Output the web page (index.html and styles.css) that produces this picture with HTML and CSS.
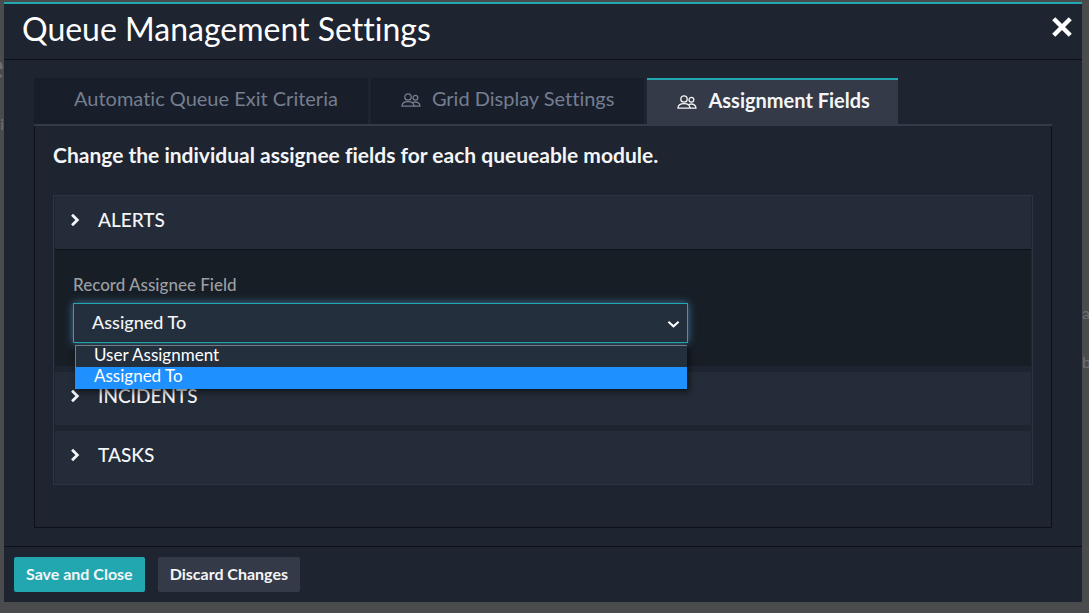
FILE: index.html
```html
<!DOCTYPE html>
<html lang="en">
<head>
  <meta charset="UTF-8">
  <title>Queue Management Settings</title>
  <link rel="stylesheet" href="styles.css">
</head>
<body>
<svg class="sprite" aria-hidden="true">
  <symbol id="users" viewBox="0 0 20 16">
    <circle cx="7" cy="5" r="3.2"/>
    <circle cx="14.4" cy="5.8" r="2.4"/>
    <path d="M1 14.2c0-3.2 2.4-4.6 6-4.6s6 1.400 6 4.600z"/>
    <path d="M12 10.400c4-1.200 7 .4 7 3.800h-6"/>
  </symbol>
  <symbol id="chevron" viewBox="0 0 8 12">
    <path d="M1.500 1.500 6 6l-4.500 4.500"/>
  </symbol>
</svg>
<div class="page">
  <div class="behind behind-left" aria-hidden="true">
    <span class="behind-title">e</span>
    <span class="behind-text">i</span>
  </div>
  <div class="modal" role="dialog" aria-labelledby="title">
    <header class="modal-header">
      <h1 id="title">Queue Management Settings</h1>
      <button class="close" type="button" aria-label="Close">
        <svg viewBox="0 0 20 20"><path d="M2.500 2.500l15 15M17.500 2.500l-15 15"/></svg>
      </button>
    </header>
    <main class="modal-body">
      <div class="tabs" role="tablist">
        <button class="tab" type="button" role="tab">Automatic Queue Exit Criteria</button>
        <button class="tab" type="button" role="tab"><svg class="users"><use href="#users"/></svg>Grid Display Settings</button>
        <button class="tab active" type="button" role="tab" aria-selected="true"><svg class="users"><use href="#users"/></svg>Assignment Fields</button>
      </div>
      <section class="panel" role="tabpanel">
        <p class="intro">Change the individual assignee fields for each queueable module.</p>
        <div class="accordion">
          <button class="module" type="button" aria-expanded="true"><svg class="chevron"><use href="#chevron"/></svg>ALERTS</button>
          <div class="module-body">
            <label for="assignee">Record Assignee Field</label>
            <div class="select-box">
              <select id="assignee">
                <option>User Assignment</option>
                <option selected>Assigned To</option>
              </select>
              <svg class="arrow" viewBox="0 0 14 8"><path d="M1.500 1.500 7 6.500l5.500-5"/></svg>
              <ul class="options" role="listbox">
                <li role="option">User Assignment</li>
                <li class="selected" role="option" aria-selected="true">Assigned To</li>
              </ul>
            </div>
          </div>
          <button class="module" type="button"><svg class="chevron"><use href="#chevron"/></svg>INCIDENTS</button>
          <button class="module" type="button"><svg class="chevron"><use href="#chevron"/></svg>TASKS</button>
        </div>
      </section>
    </main>
    <footer class="modal-footer">
      <button class="btn primary" type="button">Save and Close</button>
      <button class="btn" type="button">Discard Changes</button>
    </footer>
  </div>
  <div class="behind behind-right" aria-hidden="true">
    <span class="behind-text">at</span>
    <span class="behind-text">b</span>
  </div>
</div>
</body>
</html>
```
FILE: styles.css
```css
* { box-sizing: border-box; }
body { margin: 0; background: #4a4b4d; color: #f4f5f6; font-family: Lato, "Open Sans", sans-serif; font-size: 18px; font-variant-ligatures: none; }
button, select { font-family: inherit; font-size: inherit; font-variant-ligatures: none; color: inherit; border: 0; margin: 0; cursor: pointer; }
svg { fill: none; stroke: currentColor; }
.sprite { display: none; }

.page { display: flex; min-height: 100vh; padding: 2px 0 11px; }
.behind { display: flex; flex-direction: column; overflow: hidden; color: #6c6f73; }
.behind-left { width: 4px; align-items: flex-end; padding-top: 43px; gap: 27px; }
.behind-right { width: 7px; padding-top: 299px; gap: 25px; }
.behind-title { font-size: 36px; line-height: 40px; }
.behind-text { font-size: 16px; line-height: 24px; }

.modal { flex: 1; display: flex; flex-direction: column; background: #1e2430; border-top: 2px solid #22a7b0; }
.modal-header { display: flex; justify-content: space-between; align-items: flex-start; height: 56px; padding: 5px 9px 0 18px; border-bottom: 1px solid #0c1118; }
h1 { margin: 0; font-size: 32px; line-height: 40px; font-weight: 400; color: #fff; }
.close { background: none; padding: 7px 0 0; color: #fff; }
.close svg { display: block; width: 22px; height: 22px; stroke-width: 4; }

.modal-body { flex: 1; display: flex; flex-direction: column; padding: 18px 30px; }
.tabs { display: flex; gap: 3px; border-bottom: 2px solid #343a47; }
.tab { display: flex; align-items: center; justify-content: center; gap: 11px; height: 46px; padding: 0 30px 6px; background: #191f2a; color: #747e90; font-size: 20px; }
.tab:first-child { padding-left: 40px; }
.tab.active { background: #343a47; color: #f4f5f6; border-top: 2px solid #22a7b0; font-weight: 700; padding: 0 28px 4px 30px; }
.users { width: 20px; height: 16px; margin-top: 3px; stroke-width: 1.3; }

.panel { flex: 1; padding: 15px 18px 42px; border: 1px solid #0c1118; border-top: 0; }
.intro { margin: 0 0 26px; font-size: 21px; line-height: 28px; font-weight: 700; }
.accordion { display: flex; flex-direction: column; border: 1px solid #2c3643; padding: 0 1px; }
.module { display: flex; align-items: center; gap: 18px; height: 53px; padding: 0 15px 6px; background: #242c39; font-size: 19px; font-weight: 500; }
.module + .module, .module-body + .module { margin-top: 6px; }
.chevron { width: 10px; height: 14px; stroke-width: 2.4; }
.module-body { padding: 23px 18px; border-top: 1px solid #0c1118; background: #171e26; }
.module-body label { display: block; margin-bottom: 6px; font-size: 17px; line-height: 24px; font-weight: 500; color: #9b9fa3; }
.select-box { position: relative; max-width: 615px; }
select { display: block; width: 100%; height: 40px; padding: 0 18px 2px; appearance: none; background: #242f3e; border: 1px solid #22a7b0; font-size: 18px; font-weight: 500; outline: none; box-shadow: 0 0 8px #42759a; }
.arrow { position: absolute; right: 8px; top: 17px; width: 13px; height: 8px; stroke: #fff; stroke-width: 2.2; }
.options { position: absolute; top: 42px; left: 2px; right: 1px; z-index: 1; margin: 0; padding: 0; list-style: none; background: #242f3e; border-top: 1px solid #777b80; border-left: 1px solid #777b80; box-shadow: 2px 3px 6px #0008; }
.options li { padding: 0 18px 3px; font-size: 17px; line-height: 18px; color: #fff; }
.options .selected { background: #1e90ff; padding-bottom: 4px; }

.modal-footer { display: flex; gap: 13px; padding: 10px; border-top: 1px solid #0c1118; }
.btn { height: 35px; padding: 0 12px 2px; border-radius: 2px; background: #343a47; font-size: 16px; font-weight: 700; }
.btn.primary { background: #22a7b0; }
```
